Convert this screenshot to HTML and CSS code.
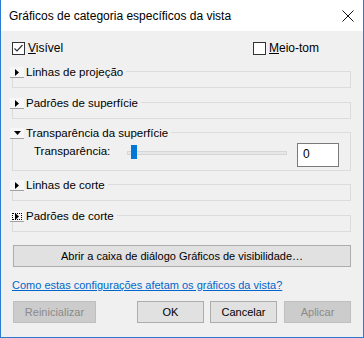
FILE: index.html
```html
<!DOCTYPE html>
<html>
<head>
<meta charset="utf-8">
<link rel="stylesheet" href="styles.css">
</head>
<body>
<div class="win">
  <div class="titlebar">
    <span class="title">Gráficos de categoria específicos da vista</span>
    <svg class="close" width="12" height="12" viewBox="0 0 12 12"><path d="M0.5 0.5 L11.5 11.5 M11.5 0.5 L0.5 11.5" stroke="#111" stroke-width="1" fill="none"/></svg>
  </div>
  <div class="content">
    <div class="checks">
      <label class="chk">
        <span class="box"><svg width="11" height="11" viewBox="0 0 11 11"><path d="M1.5 5.5 L4 8 L9.5 2" stroke="#333" stroke-width="1.2" fill="none"/></svg></span>
        <span class="chk-label"><u>V</u>isível</span>
      </label>
      <label class="chk">
        <span class="box"></span>
        <span class="chk-label"><u>M</u>eio-tom</span>
      </label>
    </div>

    <div class="groups">
      <div class="group">
        <div class="ghead">
          <span class="exp"><svg width="4" height="7" viewBox="0 0 4 7"><path d="M0 0 L4 3.5 L0 7 Z" fill="#000"/></svg></span>
          <span class="glabel">Linhas de projeção</span>
        </div>
      </div>
      <div class="group">
        <div class="ghead">
          <span class="exp"><svg width="4" height="7" viewBox="0 0 4 7"><path d="M0 0 L4 3.5 L0 7 Z" fill="#000"/></svg></span>
          <span class="glabel">Padrões de superfície</span>
        </div>
      </div>
      <div class="group open">
        <div class="ghead">
          <span class="exp"><svg width="7" height="4" viewBox="0 0 7 4"><path d="M0 0 L7 0 L3.5 4 Z" fill="#000"/></svg></span>
          <span class="glabel">Transparência da superfície</span>
        </div>
        <div class="trow">
          <span class="tlabel">Transparência:</span>
          <div class="slider">
            <div class="track"></div>
            <div class="thumb"></div>
          </div>
          <div class="tbox">0</div>
        </div>
      </div>
      <div class="group">
        <div class="ghead">
          <span class="exp"><svg width="4" height="7" viewBox="0 0 4 7"><path d="M0 0 L4 3.5 L0 7 Z" fill="#000"/></svg></span>
          <span class="glabel">Linhas de corte</span>
        </div>
      </div>
      <div class="group">
        <div class="ghead">
          <span class="exp focus"><svg width="4" height="7" viewBox="0 0 4 7"><path d="M0 0 L4 3.5 L0 7 Z" fill="#000"/></svg></span>
          <span class="glabel">Padrões de corte</span>
        </div>
      </div>
    </div>

    <button class="btn wide">Abrir a caixa de diálogo Gráficos de visibilidade…</button>
    <a class="link" href="#">Como estas configurações afetam os gráficos da vista?</a>

    <div class="actions">
      <button class="btn dis reset">Reinicializar</button>
      <button class="btn std ok">OK</button>
      <button class="btn std">Cancelar</button>
      <button class="btn std dis apply">Aplicar</button>
    </div>
  </div>
</div>
</body>
</html>
```
FILE: styles.css
```css
* { box-sizing: border-box; }
html, body { margin: 0; padding: 0; }
body {
  font-family: "Liberation Sans", Arial, sans-serif;
  font-size: 11px;
  color: #000;
  background: #f0f0f0;
}
.win {
  width: 364px;
  height: 338px;
  border: 1px solid #2b7bd4;
  border-top: none;
  background: #f0f0f0;
  display: flex;
  flex-direction: column;
}
.titlebar {
  height: 31px;
  background: #fff;
  display: flex;
  align-items: center;
  padding-left: 8px;
  padding-right: 8px;
}
.title {
  flex: 1;
  font-size: 12px;
  padding-top: 1px;
}
.close { display: block; margin-right: 1px; }

.content {
  padding: 0 12px 0 11px;
  font-size: 11px;
}
.checks {
  display: grid;
  grid-template-columns: 241px 1fr;
  margin-top: 11px;
  height: 13px;
}
.chk {
  display: flex;
  align-items: center;
  height: 13px;
}
.box {
  width: 13px;
  height: 13px;
  border: 1px solid #333;
  background: #fff;
  display: flex;
  align-items: center;
  justify-content: center;
}
.box svg { display: block; }
.chk-label { margin-left: 3px; line-height: 13px; font-size: 12px; }

.groups {
  margin-top: 16px;
  display: flex;
  flex-direction: column;
}
.group {
  border: 1px solid #dcdcdc;
  height: 17px;
  margin-bottom: 14px;
}
.group:nth-child(2), .group:nth-child(3) { margin-bottom: 13px; }
.group.open { height: 39px; }
.group:last-child { margin-bottom: 13px; }
.ghead {
  display: flex;
  align-items: center;
  height: 11px;
  margin-top: -5px;
  margin-left: -3px;
  background: #f0f0f0;
  width: fit-content;
  padding-right: 3px;
}
.exp {
  width: 14px;
  height: 11px;
  background: #f7f7f7;
  border-bottom: 1px solid #a0a0a0;
  display: flex;
  align-items: center;
  justify-content: center;
}
.exp svg { display: block; }
.exp.focus { outline: 1px dotted #000; outline-offset: -3px; }
.glabel { margin-left: 2px; line-height: 11px; white-space: nowrap; font-size: 11.5px; }

.trow {
  display: flex;
  align-items: flex-start;
  margin-top: 4px;
  padding-left: 21px;
}
.tlabel {
  width: 93px;
  line-height: 14px;
  margin-top: 1px;
  font-size: 11.5px;
}
.slider {
  position: relative;
  width: 160px;
  height: 14px;
  margin-top: 2px;
}
.track {
  margin-top: 6px;
  height: 4px;
  border: 1px solid #d6d6d6;
  background: #e7e7e7;
}
.thumb {
  position: absolute;
  left: 4px;
  top: 0;
  width: 6px;
  height: 14px;
  background: #0078d7;
}
.tbox {
  margin-left: 10px;
  width: 42px;
  height: 24px;
  border: 1px solid #7a7a7a;
  background: #fff;
  padding: 3px 0 0 5px;
  line-height: 15px;
  font-size: 12px;
}

.btn {
  font-family: "Liberation Sans", Arial, sans-serif;
  font-size: 11px;
  height: 22px;
  background: #e1e1e1;
  border: 1px solid #adadad;
  color: #000;
  padding: 0;
  margin: 0;
  display: flex;
  align-items: center;
  justify-content: center;
}
.wide {
  width: 338px;
  margin-left: 1px;
}
.link {
  display: block;
  margin-top: 11px;
  color: #0066cc;
  text-decoration: underline;
  line-height: 15px;
}
.actions {
  display: flex;
  margin-top: 8px;
  margin-left: 1px;
}
.reset { width: 83px; }
.std { width: 67px; }
.ok { margin-left: auto; margin-right: 6px; }
.apply { margin-left: 7px; }
.dis {
  background: #cccccc;
  border-color: #bfbfbf;
  color: #8a8a8a;
}
```
